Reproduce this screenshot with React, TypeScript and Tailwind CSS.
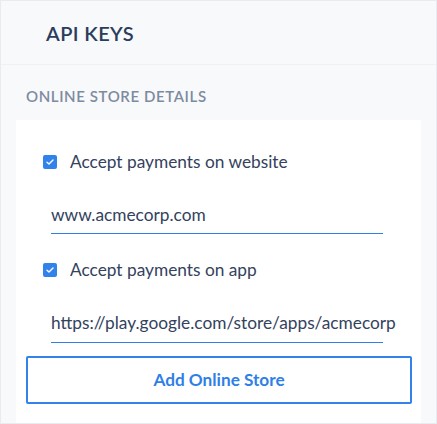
import React from "react";

function Check() {
    return (
        <span className="flex h-[14px] w-[14px] items-center justify-center rounded-[2px] bg-[#3183ea]">
            <svg width="8" height="6" viewBox="0 0 8 6" fill="none">
                <path
                    d="M1 3.2L3 5L7 1"
                    stroke="white"
                    strokeWidth="1.4"
                    strokeLinecap="round"
                    strokeLinejoin="round"
                />
            </svg>
        </span>
    );
}

function Option({ label, value, mt, pb }: { label: string; value: string; mt: string; pb: string }) {
    return (
        <div className={mt}>
            <label className="flex h-[20px] items-center gap-[13px] pl-[27px] text-[17.3px] text-[#33425e]">
                <Check />
                {label}
            </label>
            <div
                className={`ml-[35px] mt-[31px] w-[332px] border-b border-[#2f80ed] text-[17.3px] leading-6 text-[#33425e] ${pb}`}
            >
                {value}
            </div>
        </div>
    );
}

export default function App() {
    return (
        <div
            className="flex h-[424px] w-[437px] flex-col border border-[#e8ebef] bg-[#f8f9fb]"
            style={{ fontFamily: "Lato, 'Liberation Sans', sans-serif" }}
        >
            <header className="flex h-[64px] shrink-0 items-center border-b border-[#eff1f4] pl-[45px] text-[20px] font-semibold tracking-[0.02em] text-[#2b3d5b]">
                API KEYS
            </header>

            <h2 className="mt-[21px] pl-[25px] text-[15px] font-semibold leading-[20px] tracking-[0.04em] text-[#7d8ba0]">
                ONLINE STORE DETAILS
            </h2>

            <section className="mx-[15px] mt-[14px] flex-1 bg-white pt-[32px]">
                <Option label="Accept payments on website" value="www.acmecorp.com" mt="mt-0" pb="pb-[6px]" />
                <Option
                    label="Accept payments on app"
                    value="https://play.google.com/store/apps/acmecorp"
                    mt="mt-[26px]"
                    pb="pb-[7px]"
                />
                <button className="ml-[10px] mt-[13px] h-[48px] w-[386px] rounded-[2px] border-2 border-[#3183ea] text-[17.2px] font-bold text-[#2f7fe6]">
                    Add Online Store
                </button>
            </section>
        </div>
    );
}
